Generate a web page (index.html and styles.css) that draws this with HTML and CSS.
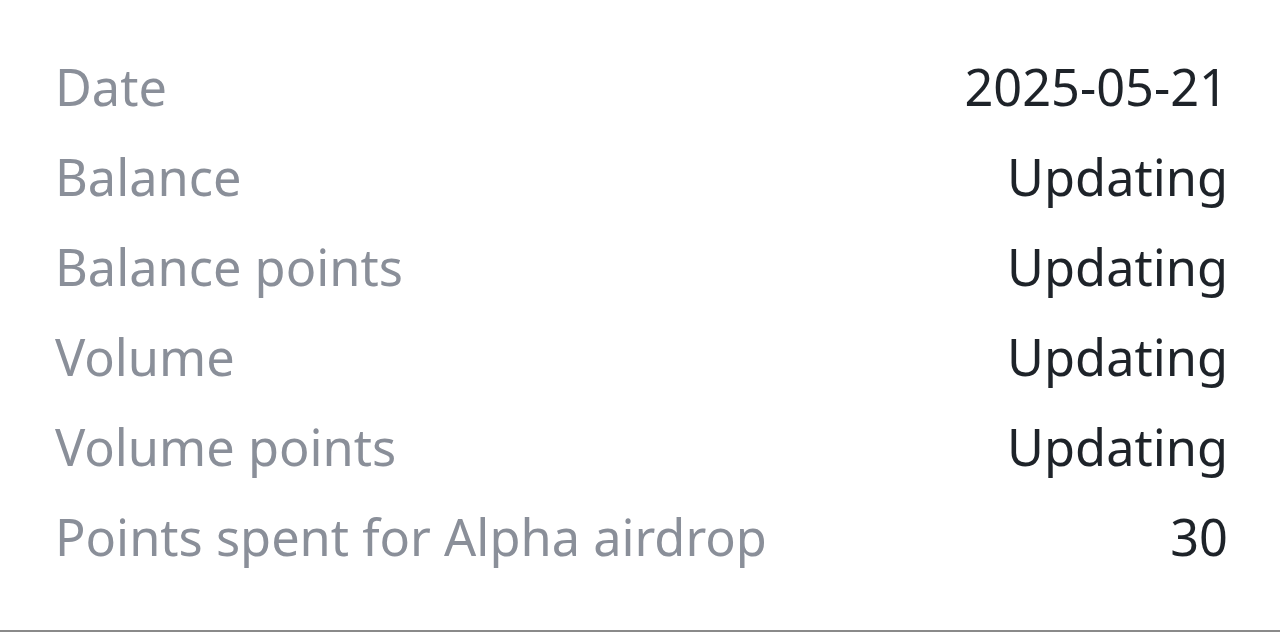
FILE: index.html
```html
<!DOCTYPE html>
<html>
<head>
<meta charset="utf-8">
<link rel="stylesheet" href="styles.css">
</head>
<body>
<div class="page">
  <div class="list">
    <div class="row"><span class="label">Date</span><span class="value">2025-05-21</span></div>
    <div class="row"><span class="label">Balance</span><span class="value">Updating</span></div>
    <div class="row"><span class="label">Balance points</span><span class="value">Updating</span></div>
    <div class="row"><span class="label">Volume</span><span class="value">Updating</span></div>
    <div class="row"><span class="label">Volume points</span><span class="value">Updating</span></div>
    <div class="row"><span class="label">Points spent for Alpha airdrop</span><span class="value">30</span></div>
  </div>
</div>
</body>
</html>
```
FILE: styles.css
```css
html, body {
  margin: 0;
  padding: 0;
  background: #ffffff;
}
.page {
  height: 630px;
  border-bottom: 2px solid #8a8a8a;
  box-sizing: content-box;
  font-family: "Noto Sans", sans-serif;
}
.list {
  padding: 41px 52px 0 55px;
  display: flex;
  flex-direction: column;
}
.row {
  height: 90px;
  display: flex;
  align-items: center;
  justify-content: space-between;
  font-size: 50.5px;
}
.label {
  color: #8a8f99;
}
.value {
  color: #1e2329;
}
```
